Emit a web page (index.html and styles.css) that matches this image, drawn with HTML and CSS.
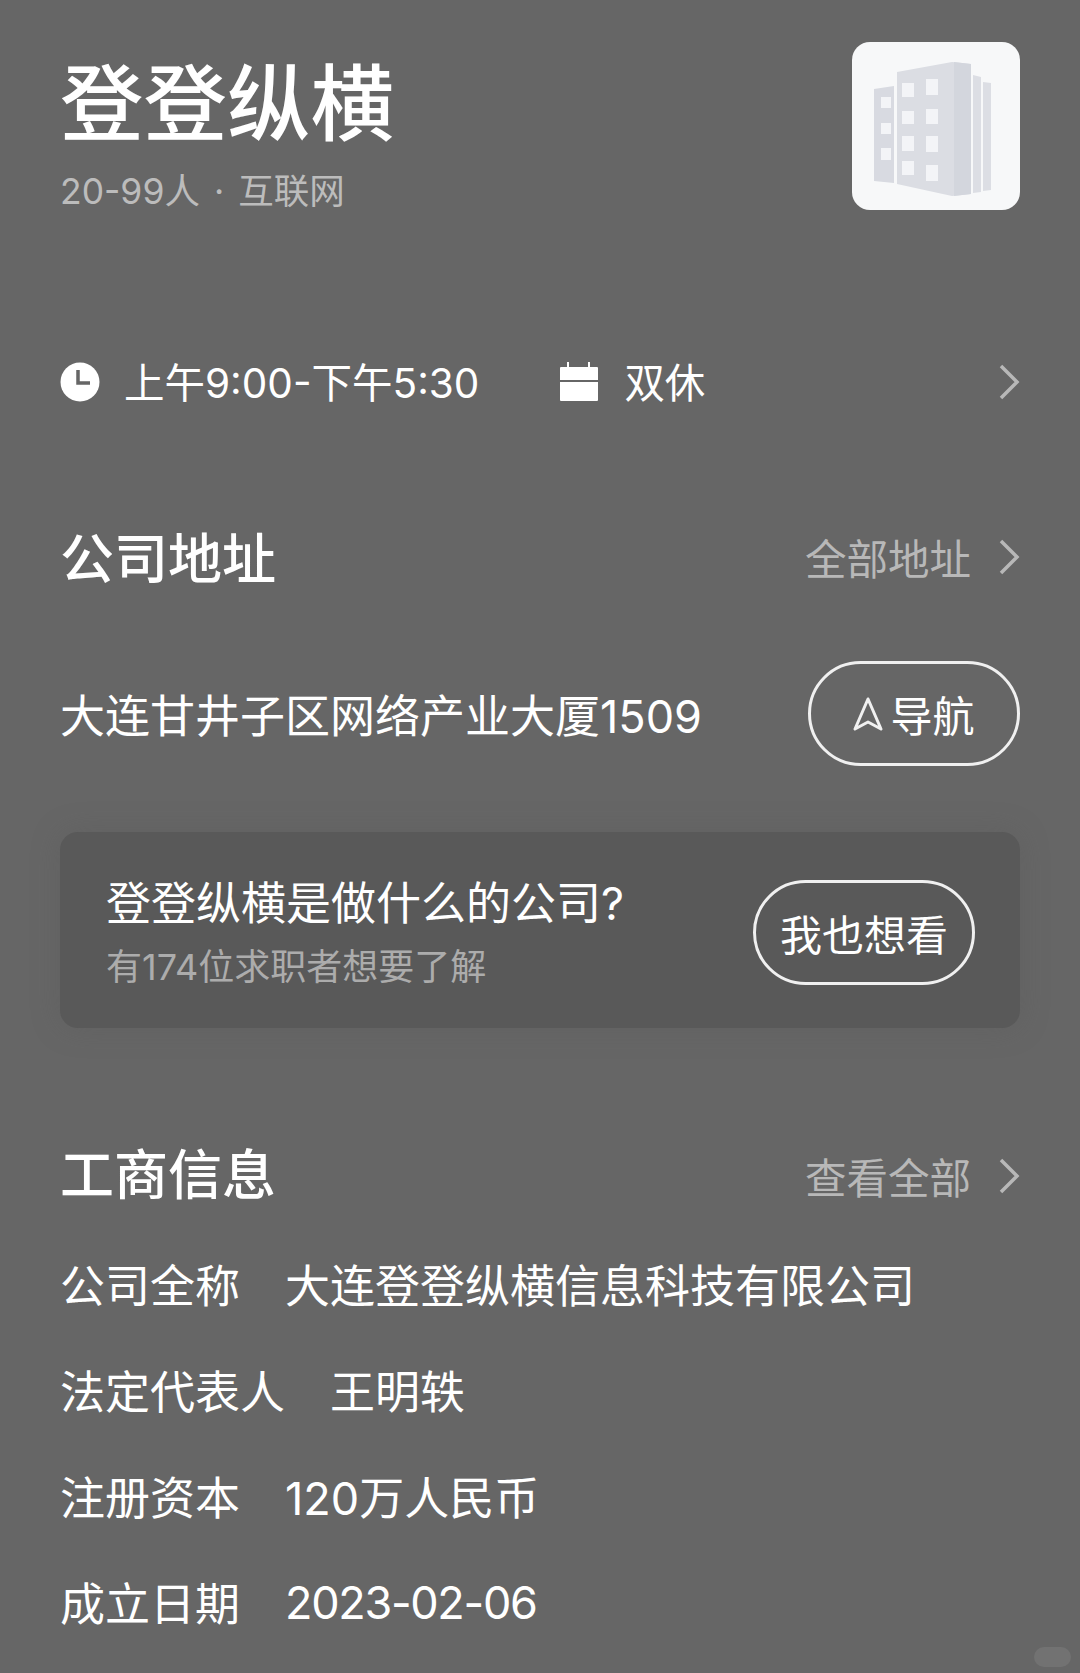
FILE: index.html
```html
<!DOCTYPE html>
<html lang="zh-CN">
<head>
    <meta charset="utf-8">
    <title>登登纵横</title>
    <link rel="stylesheet" href="styles.css">
</head>

<body>
<div class="page">
    <header class="company">
        <div class="company-text">
            <h1 class="company-name">登登纵横</h1>
            <div class="company-meta">20-99人<span class="dot">·</span>互联网</div>
        </div>
        <div class="logo">
            <svg width="168" height="168" viewBox="0 0 168 168">
                <path d="M22 47 L42 44 V141 L22 139 Z" fill="#d8dae1"/>
                <path d="M45 30 L100 20 L119 22 V152 L100 154 L45 142 Z" fill="#dbdde3"/>
                <path d="M102 20 L119 22 V152 L102 154 Z" fill="#d3d6dd"/>
                <path d="M121 33 L129 35 V150 L121 151 Z" fill="#dcdee4"/>
                <path d="M131 40 L139 41 V148 L131 149 Z" fill="#dcdee4"/>
                <g fill="#f3f4f7">
                    <rect x="29" y="55" width="10" height="11"/>
                    <rect x="29" y="81" width="10" height="11"/>
                    <rect x="29" y="106" width="10" height="12"/>
                    <rect x="50" y="41" width="12" height="14"/>
                    <rect x="74" y="37" width="12" height="16"/>
                    <rect x="50" y="69" width="12" height="13"/>
                    <rect x="74" y="67" width="12" height="15"/>
                    <rect x="50" y="94" width="12" height="15"/>
                    <rect x="74" y="94" width="12" height="16"/>
                    <rect x="50" y="119" width="12" height="14"/>
                    <rect x="74" y="123" width="12" height="16"/>
                </g>
            </svg>
        </div>
    </header>

    <div class="hours">
        <svg class="hours-icon" width="40" height="40" viewBox="0 0 40 40">
            <circle cx="20" cy="20" r="19.5" fill="#fff"/>
            <path d="M18 8 V21 H30" fill="none" stroke="#666" stroke-width="3.5"/>
        </svg>
        <span class="hours-time">上午9:00-下午5:30</span>
        <svg class="hours-icon cal" width="40" height="40" viewBox="0 0 40 40">
            <path d="M9 0 V6 M30 0 V6" stroke="#fff" stroke-width="2"/>
            <path d="M2 5 H38 a1 1 0 0 1 1 1 V18 H1 V6 a1 1 0 0 1 1 -1 Z M1 20 H39 V38 a1 1 0 0 1 -1 1 H2 a1 1 0 0 1 -1 -1 Z" fill="#fff"/>
        </svg>
        <span class="hours-rest">双休</span>
        <svg class="chevron" width="22" height="36" viewBox="0 0 22 36">
            <path d="M3 2 L19 18 L3 34" fill="none" stroke="#b8b8b8" stroke-width="3.5"/>
        </svg>
    </div>

    <section class="section-head address-head">
        <h2>公司地址</h2>
        <div class="more">全部地址
            <svg class="chevron" width="22" height="36" viewBox="0 0 22 36">
                <path d="M3 2 L19 18 L3 34" fill="none" stroke="#b8b8b8" stroke-width="3.5"/>
            </svg>
        </div>
    </section>

    <div class="address-row">
        <span class="address">大连甘井子区网络产业大厦1509</span>
        <div class="pill nav-btn">
            <svg width="30" height="36" viewBox="0 0 30 36">
                <path d="M15 3 L28 33 L15 26 L2 33 Z" fill="none" stroke="#f0f0f0" stroke-width="3" stroke-linejoin="round"/>
            </svg>
            导航
        </div>
    </div>

    <div class="card">
        <div class="card-text">
            <div class="card-title">登登纵横是做什么的公司?</div>
            <div class="card-sub">有174位求职者想要了解</div>
        </div>
        <div class="pill want-btn">我也想看</div>
    </div>

    <section class="section-head info-head">
        <h2>工商信息</h2>
        <div class="more">查看全部
            <svg class="chevron" width="22" height="36" viewBox="0 0 22 36">
                <path d="M3 2 L19 18 L3 34" fill="none" stroke="#b8b8b8" stroke-width="3.5"/>
            </svg>
        </div>
    </section>

    <div class="info-list">
        <div class="info-row"><span>公司全称</span><span>大连登登纵横信息科技有限公司</span></div>
        <div class="info-row"><span>法定代表人</span><span>王明轶</span></div>
        <div class="info-row"><span>注册资本</span><span>120万人民币</span></div>
        <div class="info-row"><span>成立日期</span><span class="date">2023-02-06</span></div>
    </div>

    <div class="watermark"></div>
</div>
</body>
</html>
```

FILE: styles.css
```css
* {
    box-sizing: border-box;
}

body {
    margin: 0;
    padding: 0;
    background-color: #666;
    color: #fff;
    font-family: Inter, "Noto Sans CJK SC", sans-serif;
}

.page {
    position: relative;
    width: 1080px;
    height: 1673px;
    padding: 0 60px;
    overflow: hidden;
}

.company {
    display: flex;
    justify-content: space-between;
    padding-top: 42px;
    height: 210px;
}

.company-name {
    margin: 0;
    font-size: 83.5px;
    font-weight: 500;
    line-height: 123px;
}

.company-meta {
    margin-top: 5px;
    font-size: 35.5px;
    line-height: 44px;
    color: #bcbcbc;
}

.dot {
    margin: 0 14px;
}

.logo {
    width: 168px;
    height: 168px;
    border-radius: 18px;
    background-color: #f7f8f9;
}

.logo svg {
    display: block;
}

.hours {
    display: flex;
    align-items: center;
    height: 60px;
    margin-top: 142px;
    font-size: 40.5px;
}

.hours-time {
    margin: 0 0 4px 24px;
}

.cal {
    margin-left: 80px;
}

.hours-rest {
    margin: 0 0 4px 25px;
}

.hours .chevron {
    margin-left: auto;
}

.chevron {
    display: block;
    flex-shrink: 0;
}

.section-head {
    display: flex;
    justify-content: space-between;
    align-items: center;
    height: 70px;
}

.section-head h2 {
    margin: 0 0 4px;
    font-size: 54px;
    font-weight: 500;
}

.address-head {
    margin-top: 110px;
}

.more {
    display: flex;
    align-items: center;
    gap: 27px;
    font-size: 41.5px;
    color: #b8b8b8;
}

.info-head .more {
    margin-top: 6px;
}

.address-row {
    display: flex;
    justify-content: space-between;
    align-items: center;
    margin-top: 69px;
    font-size: 45px;
}

.pill {
    display: flex;
    align-items: center;
    justify-content: center;
    height: 105px;
    border: 3px solid #f0f0f0;
    border-radius: 53px;
    font-size: 42px;
}

.nav-btn {
    width: 212px;
    gap: 7px;
}

.want-btn {
    width: 222px;
    margin-top: -3px;
}

.card {
    display: flex;
    justify-content: space-between;
    align-items: center;
    height: 196px;
    margin-top: 66px;
    padding: 8px 45px 0 46px;
    border-radius: 18px;
    background-color: #595959;
    box-shadow: 0 0 28px rgba(90, 90, 90, 0.35);
}

.card-title {
    font-size: 45px;
    line-height: 60px;
}

.card-sub {
    margin-top: 5px;
    font-size: 36px;
    line-height: 56px;
    color: #acacac;
}

.info-head {
    margin-top: 110px;
}

.info-list {
    margin-top: 22px;
}

.info-row {
    display: flex;
    gap: 45px;
    height: 106px;
    align-items: center;
    font-size: 45px;
}

.date {
    letter-spacing: -1.3px;
    margin-top: 3px;
}

.watermark {
    position: absolute;
    right: 9px;
    bottom: 6px;
    width: 37px;
    height: 20px;
    border-radius: 10px;
    background-color: #727272;
}
```
